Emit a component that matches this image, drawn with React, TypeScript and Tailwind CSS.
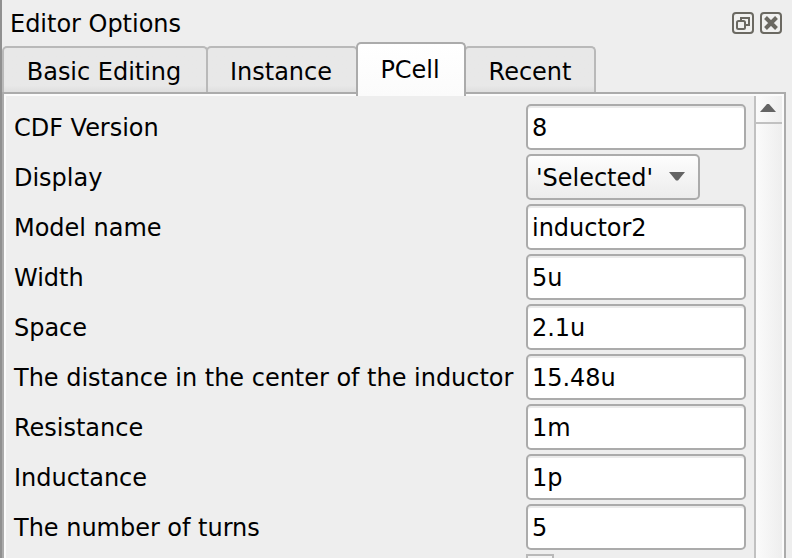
import React from "react";

type Field = { label: string; value: string; select?: boolean };

const fields: Field[] = [
  { label: "CDF Version", value: "8" },
  { label: "Display", value: "'Selected'", select: true },
  { label: "Model name", value: "inductor2" },
  { label: "Width", value: "5u" },
  { label: "Space", value: "2.1u" },
  { label: "The distance in the center of the inductor", value: "15.48u" },
  { label: "Resistance", value: "1m" },
  { label: "Inductance", value: "1p" },
  { label: "The number of turns", value: "5" },
];

function Tab({ label, className }: { label: string; className: string }) {
  return (
    <div
      className={`flex h-[46px] items-center justify-center rounded-t-[5px] border-2 border-b-0 border-[#b9b9b9] bg-linear-to-b from-[#e8e8e8] from-85% to-[#dedede] pt-1 ${className}`}
    >
      {label}
    </div>
  );
}

function FieldRow({ label, value, select }: Field) {
  return (
    <div className="flex h-[50px] items-start">
      <div className="w-[520px] shrink-0 pl-2 leading-[48px]">{label}</div>
      {select ? (
        <div className="flex h-[46px] w-[174px] items-center justify-between rounded-[5px] border-2 border-[#ababab] bg-linear-to-b from-[#fdfdfd] to-[#ececec] pr-[13px] pl-2">
          <span className="pt-[2px]">{value}</span>
          <svg width="16" height="9" viewBox="0 0 16 9" className="-mt-px">
            <path d="M0 0H16L9 8.5H7Z" fill="#646464" />
          </svg>
        </div>
      ) : (
        <div className="h-[46px] w-[220px] rounded-[5px] border-2 border-[#ababab] bg-white pl-1 leading-[44px] shadow-[inset_0_2px_0_#ebebeb]">
          {value}
        </div>
      )}
    </div>
  );
}

export default function App() {
  return (
    <div className="flex h-[558px] w-[792px] overflow-hidden bg-[#eeeeee] font-['DejaVu_Sans',sans-serif] text-[24px] tracking-[-0.02px] whitespace-nowrap text-black">
      <div className="w-[2px] shrink-0 bg-[#909090]" />
      <div className="flex w-[790px] flex-col">
        <header className="flex h-[42px] shrink-0 items-start justify-between pr-[10px] pl-2">
          <h1 className="leading-[48px]">Editor Options</h1>
          <div className="flex gap-[6px] pt-3">
            <svg width="22" height="22" viewBox="0 0 22 22" fill="none" stroke="#6b6962" strokeWidth="2">
              <rect x="1" y="1" width="20" height="20" rx="3" fill="#f1f1f0" />
              <path d="M9 9V6H17V13H14" />
              <rect x="5" y="9" width="8" height="8" rx="1.5" />
            </svg>
            <svg width="22" height="22" viewBox="0 0 22 22" fill="none" stroke="#6b6962" strokeWidth="2">
              <rect x="1" y="1" width="20" height="20" rx="3" fill="#f1f1f0" />
              <path d="M5.5 5.5L16.5 16.5M16.5 5.5L5.5 16.5" strokeWidth="4" />
            </svg>
          </div>
        </header>
        <nav className="flex h-[50px] shrink-0 items-end">
          <Tab label="Basic Editing" className="w-[206px] pr-[2px]" />
          <Tab label="Instance" className="-ml-[2px] w-[152px] pr-[2px]" />
          <div className="z-10 -mr-[2px] -mb-[4px] -ml-[2px] flex h-[54px] w-[110px] items-start justify-center rounded-t-[5px] border-2 border-b-0 border-[#ababab] bg-linear-to-b from-white to-[#fbfbfb] pr-[2px] leading-[52px]">
            PCell
          </div>
          <Tab label="Recent" className="w-[132px]" />
        </nav>
        <main className="flex h-[466px] w-[784px] border-2 border-b-0 border-[#ababab]">
          <div className="flex w-[780px] border-2 border-b-0 border-[#fbfbfb]">
            <section className="w-[748px] shrink-0 pt-2">
              {fields.map((field) => (
                <FieldRow key={field.label} {...field} />
              ))}
              <div className="ml-[520px] h-7 w-7 border-2 border-[#b9b9b9] bg-[#f4f4f4]" />
            </section>
            <aside className="w-[28px] border-l-2 border-[#c1c1c1] bg-linear-to-r from-[#fbfbfb] to-[#eeeeee]">
              <div className="flex h-7 items-start justify-center border-b-2 border-[#c1c1c1] pt-2 pr-[2px]">
                <svg width="16" height="8" viewBox="0 0 16 8">
                  <path d="M0 8H16L9 0H7Z" fill="#646464" />
                </svg>
              </div>
            </aside>
          </div>
        </main>
      </div>
    </div>
  );
}
